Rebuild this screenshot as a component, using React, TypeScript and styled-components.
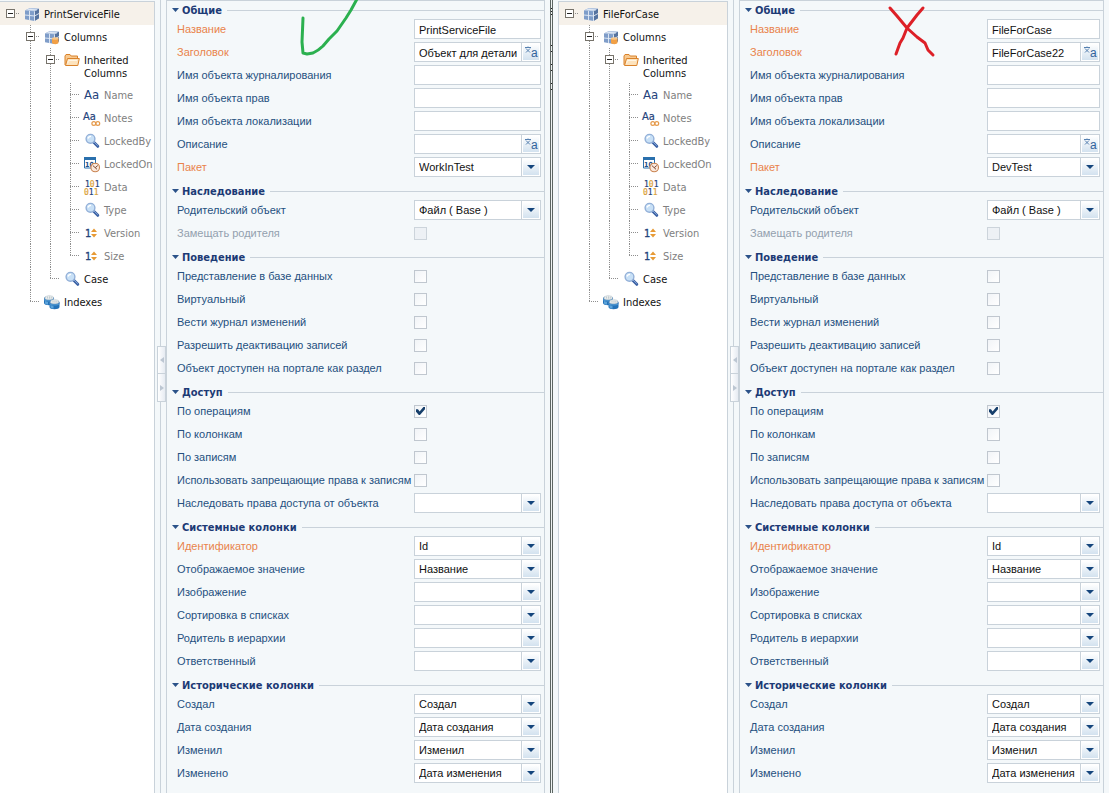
import React, { useId } from 'react';
import styled, { createGlobalStyle, css } from 'styled-components';

const FONT = '"DejaVu Sans Condensed", "Noto Sans", sans-serif';
const FORM_FONT = '"Liberation Sans", Arial, sans-serif';
const LINE = '#c9d2da';
const DOTS = '#8e8e8e';

const GlobalStyle = createGlobalStyle`
  * { box-sizing: border-box; }
  body {
    margin: 0;
    background: #f4f8fa;
    color: #111;
    font: 11px/13px ${FONT};
  }
  button, input, select { font: inherit; color: inherit; }
`;

/* ---------- page ---------- */

const Page = styled.main`
  display: grid;
  grid-template-columns: minmax(0, 550fr) 3px minmax(0, 556fr);
  min-height: 100vh;
  overflow: hidden;
`;

const Designer = styled.section<{ $tree: number; $inset?: boolean }>`
  display: grid;
  grid-template-columns: ${(p) => p.$tree}px 11px minmax(0, 1fr);
  padding: 0 5px 0 ${(p) => (p.$inset ? 5 : 0)}px;
`;

const WindowEdge = styled.div`
  border: solid #5d6663;
  border-width: 0 1px;
  background: #eef2f2;
`;

/* ---------- tree ---------- */

const Tree = styled.nav<{ $framed?: boolean }>`
  margin-top: 1px;
  background: #fff;
  border: solid ${LINE};
  border-width: 1px 1px 0 ${(p) => (p.$framed ? 1 : 0)}px;
  overflow: hidden;
`;

const TreeList = styled.ul`
  margin: 0;
  padding: 0;
  list-style: none;
`;

const TreeRow = styled.li<{ $selected?: boolean }>`
  display: flex;
  min-height: 23px;
  background: ${(p) => (p.$selected ? '#f6f1ea' : 'none')};
`;

type RailKind = 'blank' | 'pass' | 'tee' | 'end' | 'root';

const vertical = `repeating-linear-gradient(180deg, ${DOTS} 0 1px, transparent 1px 2px)`;
const horizontal = `repeating-linear-gradient(90deg, ${DOTS} 0 1px, transparent 1px 2px)`;

const Rail = styled.span<{ $kind: RailKind }>`
  flex: none;
  width: 20px;
  padding: 7px 0 0 6px;
  background-repeat: no-repeat;
  ${(p) =>
    p.$kind === 'pass' &&
    css`
      background-image: ${vertical};
      background-position: 10px 0;
      background-size: 1px 100%;
    `}
  ${(p) =>
    p.$kind === 'tee' &&
    css`
      background-image: ${vertical}, ${horizontal};
      background-position: 10px 0, 10px 11px;
      background-size: 1px 100%, 10px 1px;
    `}
  ${(p) =>
    p.$kind === 'end' &&
    css`
      background-image: ${vertical}, ${horizontal};
      background-position: 10px 0, 10px 11px;
      background-size: 1px 12px, 10px 1px;
    `}
  ${(p) =>
    p.$kind === 'root' &&
    css`
      background-image: ${horizontal};
      background-position: 10px 11px;
      background-size: 10px 1px;
    `}
`;

const Toggle = styled.button`
  display: block;
  width: 9px;
  height: 9px;
  padding: 0;
  border: 1px solid #77736b;
  background: linear-gradient(#222, #222) center / 5px 1px no-repeat #fff;
`;

const NodeIcon = styled.svg`
  flex: none;
  width: 16px;
  height: 16px;
  margin: 4px 4px 0;
  overflow: visible;
`;

const NodeText = styled.span<{ $muted?: boolean }>`
  padding: 6px 0 3px;
  color: ${(p) => (p.$muted ? '#808080' : '#111')};
`;

/* ---------- splitter ---------- */

const Splitter = styled.div`
  display: flex;
  flex-direction: column;
  padding-left: 2px;
`;

const SplitLine = styled.span<{ $top?: boolean }>`
  flex: ${(p) => (p.$top ? '0 0 346px' : '1')};
  width: 1px;
  margin-left: 3px;
  background: ${LINE};
`;

const SplitButton = styled.button`
  display: grid;
  place-items: center;
  width: 9px;
  height: 28px;
  padding: 0;
  border: 1px solid ${LINE};
  background: linear-gradient(90deg, #fff, #e6ebf2);

  & + & {
    border-top: 0;
  }
  svg {
    width: 4px;
    height: 6px;
    fill: #bcc6d2;
  }
`;

/* ---------- property panel ---------- */

const Panel = styled.form`
  position: relative;
  padding-top: 1px;
  border: solid ${LINE};
  border-width: 1px 1px 0;
`;

const Group = styled.fieldset`
  margin: 0 0 4px;
  padding: 0;
  border: 0;
  min-width: 0;
`;

const GroupTitle = styled.legend`
  display: flex;
  align-items: center;
  width: 100%;
  height: 16px;
  padding: 0 0 0 5px;
  color: #1c3a75;
  font-weight: bold;

  svg {
    width: 7px;
    height: 4px;
    margin-right: 3px;
    fill: #2b5289;
  }
  &::after {
    content: '';
    flex: 1;
    height: 1px;
    margin-left: 5px;
    background: ${LINE};
  }
`;

const Row = styled.div`
  display: grid;
  grid-template-columns: 234px minmax(0, 1fr);
  column-gap: 3px;
  align-items: center;
  height: 23px;
  padding: 0 3px 1px 10px;
  font-family: ${FORM_FONT};
`;

const Label = styled.label<{ $tone?: 'required' | 'disabled' }>`
  white-space: nowrap;
  color: ${(p) =>
    p.$tone === 'required' ? '#e9834b' : p.$tone === 'disabled' ? '#93a0ae' : '#25507f'};
`;

const Box = styled.div`
  display: grid;
  grid-template-columns: minmax(0, 1fr) 19px;
  grid-template-rows: 18px;
  border: 1px solid ${LINE};
  background: #fff;
`;

const textArea = css`
  min-width: 0;
  width: 100%;
  height: 18px;
  margin: 0;
  padding: 1px 4px 0;
  border: 0;
  border-radius: 0;
  outline: 0;
  background: none;
  color: #111;
`;

const TextInput = styled.input<{ $wide?: boolean }>`
  ${textArea}
  grid-column: ${(p) => (p.$wide ? '1 / -1' : '1')};
`;

const Select = styled.select`
  ${textArea}
  appearance: none;
  grid-column: 1 / -1;
  grid-row: 1;
`;

const tile = css`
  display: grid;
  place-items: center;
  padding: 0;
  border: solid #fff;
  border-width: 1px;
  box-shadow: -1px 0 ${LINE};
  margin-left: 1px;
  background: linear-gradient(#fff, #d3e2ef);
`;

const Arrow = styled.span`
  ${tile}
  grid-column: 2;
  grid-row: 1;
  pointer-events: none;

  svg {
    width: 8px;
    height: 4px;
    fill: #14457c;
  }
`;

const TranslateButton = styled.button`
  ${tile}
  svg {
    width: 14px;
    height: 14px;
    overflow: visible;
  }
`;

const Check = styled.input`
  appearance: none;
  display: grid;
  place-items: center;
  width: 13px;
  height: 13px;
  margin: 0;
  border: 1px solid #c0c7cf;
  background: linear-gradient(135deg, #f1f4f7, #fff);

  &:disabled {
    border-color: #ccd4db;
    background: #edf1f5;
  }
  &:checked::before {
    content: '';
    width: 9px;
    height: 8px;
    background: #163f6b;
    clip-path: polygon(0 28%, 22% 28%, 40% 55%, 82% 0, 100% 0, 100% 28%, 44% 100%, 32% 100%, 0 58%);
  }
`;

const Sketch = styled.svg<{ $left: number }>`
  position: absolute;
  top: -1px;
  left: ${(p) => p.$left}px;
  width: 64px;
  height: 60px;
  fill: none;
  stroke-width: 3;
  stroke-linecap: round;
  stroke-linejoin: round;
  pointer-events: none;
`;

/* ---------- icons ---------- */

type IconName =
  | 'cube'
  | 'columns'
  | 'folder'
  | 'text'
  | 'memo'
  | 'lookup'
  | 'datetime'
  | 'binary'
  | 'number'
  | 'indexes';

const Cube = () => (
  <g>
    <path d="M1 4.500 6 2l9 .8v9.400L10.500 15 1 13.200z" fill="#7f9dc9" />
    <path d="M1 4.500 6 2l9 .8-4.500 2.500z" fill="#bccde6" />
    <path d="M10.500 5.300 15 2.800v9.400L10.500 15z" fill="#56739f" />
    <path
      d="M1 9l9.500 1L15 7.500M5.500 4.800v9.200M10.500 5.300V15M3.500 3.200l9.300.9"
      stroke="#e4ecf6"
      strokeWidth=".9"
      fill="none"
    />
  </g>
);

const Drum = ({ x, y }: { x: number; y: number }) => (
  <g transform={`translate(${x} ${y})`}>
    <path d="M0 3.500v4.500c0 3 10 3 10 0V3.500z" fill="#2472b8" />
    <path d="M1 6v2.500c.8.8 2 1 3 1.200V7z" fill="#5ba3da" />
    <ellipse cx="5" cy="3.500" rx="5" ry="2.300" fill="#4f86bb" />
    <path
      d="M1 3.800 1.500 1.500 5 .3l3.800.9.4 2.600C7 5.200 3 5.200 1 3.800z"
      fill="#e9edec"
      stroke="#b9c4cc"
      strokeWidth=".4"
    />
    <path d="M3.500 1.500v2M5.500 1.300v2.400M7.300 1.600v2" stroke="#a9b6bf" strokeWidth=".6" />
    <path d="M0 3.800c1 2 9 2 10 0v1.200c-1 2-9 2-10 0z" fill="#4b95d0" />
  </g>
);

const glyphs: Record<IconName, React.ReactNode> = {
  cube: <Cube />,
  columns: (
    <g>
      <Cube />
      <path d="M8 9.500h6.500v4.300c0 1.800-6.500 1.800-6.500 0z" fill="#f2a045" />
      <ellipse cx="11.250" cy="9.500" rx="3.250" ry="1.200" fill="#f9c78a" />
    </g>
  ),
  folder: (
    <g stroke="#d9822b" strokeWidth="1" strokeLinejoin="round">
      <path d="M1 13V4l1-1.500h4L7.200 4h6.300v3" fill="#f8c98f" />
      <path d="M1.500 13.500 3.500 6.500h11.800l-1.500 7z" fill="#fde3bd" />
      <path d="M3.600 11.500 4.500 8.500h8.500" fill="none" stroke="#fff6e6" />
    </g>
  ),
  text: (
    <text x="0" y="12" fontSize="13" fill="#24437c">
      Aa
    </text>
  ),
  memo: (
    <g>
      <text x="-1" y="10" fontSize="11" fill="#24437c" stroke="#24437c" strokeWidth=".2">
        Aa
      </text>
      <g fill="none" stroke="#e59a4b" strokeWidth="1.200">
        <circle cx="9.800" cy="13.500" r="1.900" />
        <circle cx="13.800" cy="13.500" r="1.900" />
      </g>
    </g>
  ),
  lookup: (
    <g>
      <path d="m9.500 9 4.300 4.300" stroke="#3c62a5" strokeWidth="3" strokeLinecap="round" />
      <path d="m10 9 3.500 3.400" stroke="#86a6d6" strokeWidth="1" strokeLinecap="round" />
      <circle cx="6.500" cy="5.800" r="4.400" fill="#c8e0f6" stroke="#93b0d8" strokeWidth="1.400" />
      <path d="M4 5.500C4.300 4 5.300 3.300 7 3.300" stroke="#fff" strokeWidth="1.300" fill="none" />
    </g>
  ),
  datetime: (
    <g>
      <path d="M.5 1.500h11v10.500H.5z" fill="#fff" stroke="#2a70ad" />
      <path d="M0 1h12v3H0z" fill="#2a70ad" />
      <text x="1" y="11" fontSize="7" fontWeight="bold" fill="#20508a">
        10
      </text>
      <circle cx="11.200" cy="11.500" r="4.300" fill="#fbe9dc" stroke="#c9824f" strokeWidth="1.100" />
      <path
        d="m8.800 9.500 2.400 2.200 2.600-2.200M11.200 11.700l1.800 1.600"
        stroke="#7c4a35"
        strokeWidth="1"
        fill="none"
      />
    </g>
  ),
  binary: (
    <g fontSize="8" fontFamily="DejaVu Sans Mono, monospace" strokeWidth=".2">
      <text x="1" y="8" fill="#24437c" stroke="#24437c">
        1
        <tspan fill="#dba33a" stroke="#dba33a">
          0
        </tspan>
        1
      </text>
      <text x="0" y="16" fill="#dba33a" stroke="#dba33a">
        0
        <tspan fill="#24437c" stroke="#24437c">
          1
        </tspan>
        1
      </text>
    </g>
  ),
  number: (
    <g>
      <text x="1" y="12" fontSize="11" fill="#24437c" stroke="#24437c" strokeWidth=".3">
        1
      </text>
      <path d="M7 7l3-3.500L13 7zM7 9h6l-3 3.500z" fill="#e79a35" />
    </g>
  ),
  indexes: (
    <g>
      <Drum x={0} y={1} />
      <Drum x={5.5} y={5} />
    </g>
  ),
};

const Translate = () => (
  <svg viewBox="0 0 14 14" aria-hidden="true">
    <path
      d="M1 2.500h6M4 1.500v1M2 3.500l4 4M6 3.500l-4 4"
      stroke="#5580b0"
      strokeWidth="1"
      fill="none"
    />
    <text x="7" y="12" fontSize="12" fill="#31639c">
      a
    </text>
  </svg>
);

/* ---------- data ---------- */

interface TreeNode {
  text: string;
  icon: IconName;
  rails: RailKind[];
  open?: boolean;
  muted?: boolean;
}

const leaf = (text: string, icon: IconName, last = false): TreeNode => ({
  text,
  icon,
  rails: ['blank', 'pass', 'pass', last ? 'end' : 'tee'],
  muted: true,
});

const treeNodes = (root: string): TreeNode[] => [
  { text: root, icon: 'cube', rails: ['root'], open: true },
  { text: 'Columns', icon: 'columns', rails: ['blank', 'tee'], open: true },
  { text: 'Inherited Columns', icon: 'folder', rails: ['blank', 'pass', 'tee'], open: true },
  leaf('Name', 'text'),
  leaf('Notes', 'memo'),
  leaf('LockedBy', 'lookup'),
  leaf('LockedOn', 'datetime'),
  leaf('Data', 'binary'),
  leaf('Type', 'lookup'),
  leaf('Version', 'number'),
  leaf('Size', 'number', true),
  { text: 'Case', icon: 'lookup', rails: ['blank', 'pass', 'end'] },
  { text: 'Indexes', icon: 'indexes', rails: ['blank', 'end'] },
];

interface Prop {
  label: string;
  kind: 'text' | 'localized' | 'select' | 'check';
  value?: string;
  on?: boolean;
  tone?: 'required' | 'disabled';
}

interface ObjectInfo {
  name: string;
  title: string;
  pkg: string;
}

const check = (label: string, on = false): Prop => ({ label, kind: 'check', on });
const select = (label: string, value = '', tone?: Prop['tone']): Prop => ({
  label,
  kind: 'select',
  value,
  tone,
});

const groups = (o: ObjectInfo): { title: string; props: Prop[] }[] => [
  {
    title: 'Общие',
    props: [
      { label: 'Название', kind: 'text', value: o.name, tone: 'required' },
      { label: 'Заголовок', kind: 'localized', value: o.title, tone: 'required' },
      { label: 'Имя объекта журналирования', kind: 'text' },
      { label: 'Имя объекта прав', kind: 'text' },
      { label: 'Имя объекта локализации', kind: 'text' },
      { label: 'Описание', kind: 'localized' },
      select('Пакет', o.pkg, 'required'),
    ],
  },
  {
    title: 'Наследование',
    props: [
      select('Родительский объект', 'Файл ( Base )'),
      { label: 'Замещать родителя', kind: 'check', tone: 'disabled' },
    ],
  },
  {
    title: 'Поведение',
    props: [
      check('Представление в базе данных'),
      check('Виртуальный'),
      check('Вести журнал изменений'),
      check('Разрешить деактивацию записей'),
      check('Объект доступен на портале как раздел'),
    ],
  },
  {
    title: 'Доступ',
    props: [
      check('По операциям', true),
      check('По колонкам'),
      check('По записям'),
      check('Использовать запрещающие права к записям'),
      select('Наследовать права доступа от объекта'),
    ],
  },
  {
    title: 'Системные колонки',
    props: [
      select('Идентификатор', 'Id', 'required'),
      select('Отображаемое значение', 'Название'),
      select('Изображение'),
      select('Сортировка в списках'),
      select('Родитель в иерархии'),
      select('Ответственный'),
    ],
  },
  {
    title: 'Исторические колонки',
    props: [
      select('Создал', 'Создал'),
      select('Дата создания', 'Дата создания'),
      select('Изменил', 'Изменил'),
      select('Изменено', 'Дата изменения'),
    ],
  },
];

/* ---------- parts ---------- */

function ObjectTree({ root, framed }: { root: string; framed?: boolean }) {
  return (
    <Tree $framed={framed} aria-label={root}>
      <TreeList>
        {treeNodes(root).map((node, i) => (
          <TreeRow key={node.text} $selected={i === 0}>
            {node.rails.map((kind, k) => (
              <Rail key={k} $kind={kind}>
                {node.open && k === node.rails.length - 1 && (
                  <Toggle type="button" aria-label={`Свернуть ${node.text}`} />
                )}
              </Rail>
            ))}
            <NodeIcon viewBox="0 0 16 16" aria-hidden="true">
              {glyphs[node.icon]}
            </NodeIcon>
            <NodeText $muted={node.muted}>{node.text}</NodeText>
          </TreeRow>
        ))}
      </TreeList>
    </Tree>
  );
}

function PropRow({ prop }: { prop: Prop }) {
  const id = useId();
  return (
    <Row>
      <Label htmlFor={id} $tone={prop.tone}>
        {prop.label}
      </Label>
      {prop.kind === 'check' && (
        <Check id={id} type="checkbox" defaultChecked={prop.on} disabled={prop.tone === 'disabled'} />
      )}
      {prop.kind === 'text' && (
        <Box>
          <TextInput id={id} $wide defaultValue={prop.value} />
        </Box>
      )}
      {prop.kind === 'localized' && (
        <Box>
          <TextInput id={id} defaultValue={prop.value} />
          <TranslateButton type="button" aria-label="Перевод">
            <Translate />
          </TranslateButton>
        </Box>
      )}
      {prop.kind === 'select' && (
        <Box>
          <Select id={id} defaultValue={prop.value}>
            <option>{prop.value}</option>
          </Select>
          <Arrow>
            <svg viewBox="0 0 8 4" aria-hidden="true">
              <path d="M0 0h8L4 4z" />
            </svg>
          </Arrow>
        </Box>
      )}
    </Row>
  );
}

function PanelSplitter() {
  return (
    <Splitter>
      <SplitLine $top />
      <SplitButton type="button" aria-label="Свернуть влево">
        <svg viewBox="0 0 4 6">
          <path d="M4 0v6L0 3z" />
        </svg>
      </SplitButton>
      <SplitButton type="button" aria-label="Свернуть вправо">
        <svg viewBox="0 0 4 6">
          <path d="M0 0v6l4-3z" />
        </svg>
      </SplitButton>
      <SplitLine />
    </Splitter>
  );
}

function PropertyPanel({ object, children }: { object: ObjectInfo; children: React.ReactNode }) {
  return (
    <Panel>
      {groups(object).map((group) => (
        <Group key={group.title}>
          <GroupTitle>
            <svg viewBox="0 0 7 4" aria-hidden="true">
              <path d="M0 0h7L3.500 4z" />
            </svg>
            {group.title}
          </GroupTitle>
          {group.props.map((prop) => (
            <PropRow key={prop.label} prop={prop} />
          ))}
        </Group>
      ))}
      {children}
    </Panel>
  );
}

export default function App() {
  return (
    <>
      <GlobalStyle />
      <Page>
        <Designer $tree={155}>
          <ObjectTree root="PrintServiceFile" />
          <PanelSplitter />
          <PropertyPanel
            object={{ name: 'PrintServiceFile', title: 'Объект для детали', pkg: 'WorkInTest' }}
          >
            <Sketch $left={132} viewBox="0 0 64 60" stroke="#2bb04f" aria-hidden="true">
              <path d="M4 18 3 42l1 11 4 1 6-1c4-2 7-4 10-7l6-7 8-8 9-13 5-8 6-11" />
            </Sketch>
          </PropertyPanel>
        </Designer>
        <WindowEdge>
          <svg width="1" height="100" viewBox="0 0 1 100" stroke="#222" aria-hidden="true">
            <path d="M0 8.500h1M0 11.500h1M0 14.500h1M0 45.500h1M0 51.500h1M0 64.500h1M0 70.500h1M0 83.500h1M0 89.500h1" />
          </svg>
        </WindowEdge>
        <Designer $tree={170} $inset>
          <ObjectTree root="FileForCase" framed />
          <PanelSplitter />
          <PropertyPanel object={{ name: 'FileForCase', title: 'FileForCase22', pkg: 'DevTest' }}>
            <Sketch $left={147} viewBox="0 0 64 60" stroke="#dd2027" aria-hidden="true">
              <path d="m3 8 7 8 10 12 10 9 8 6 3 7 5 5M36 8l-6 7-10 13-4 10-3 5-4 11" />
            </Sketch>
          </PropertyPanel>
        </Designer>
      </Page>
    </>
  );
}
